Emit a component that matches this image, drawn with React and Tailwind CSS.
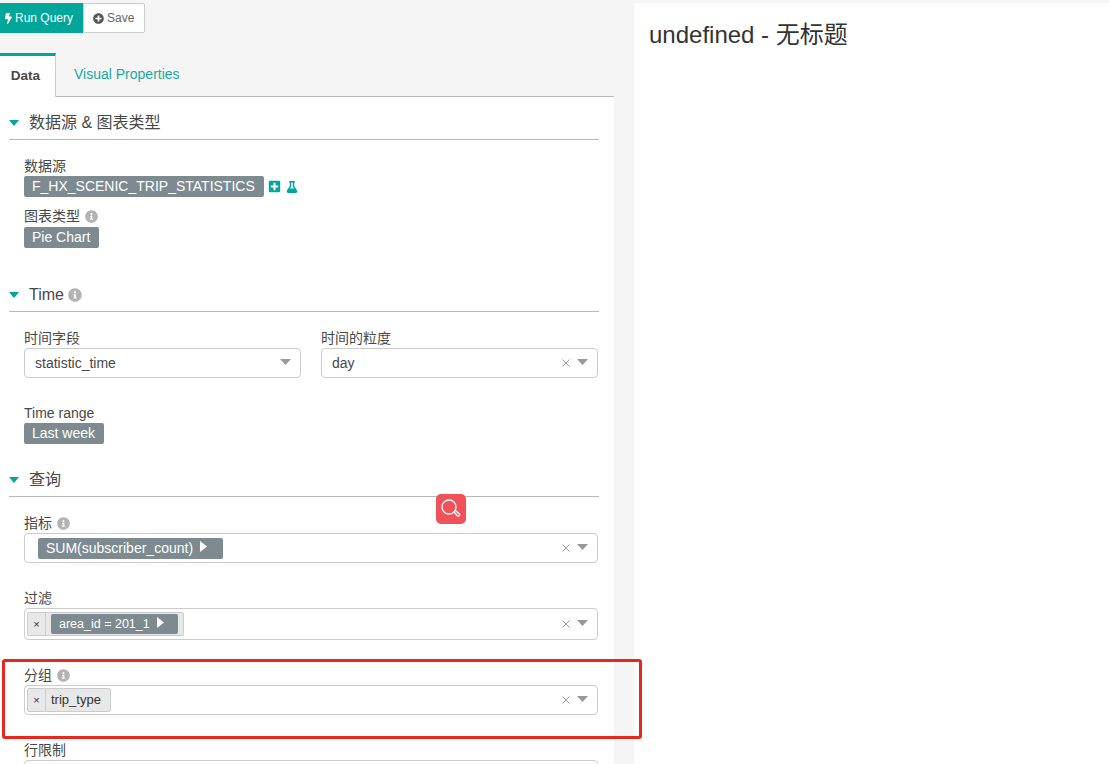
import React from "react";
import { FaBolt, FaPlusCircle, FaPlusSquare, FaFlask, FaInfoCircle } from "react-icons/fa";

const Caret = ({ className }) => (
  <svg viewBox="0 0 10 6" preserveAspectRatio="none" className={className}>
    <path d="M0 0 H10 L5 6 Z" fill="currentColor" />
  </svg>
);

const RightCaret = () => (
  <svg viewBox="0 0 7 11" className="w-[7px] h-[11px] ml-[7px] -mt-[3px]">
    <path d="M0 0 L7 5.5 L0 11 Z" fill="currentColor" />
  </svg>
);

const Info = ({ className = "", size = 13 }) => (
  <FaInfoCircle className={`text-[#b3b3b3] ${className}`} size={size} />
);

const Section = ({ title, children, className = "" }) => (
  <div className={`flex items-center h-[34px] border-b border-[#b8b8b8] w-[590px] ${className}`}>
    <Caret className="w-[10px] h-[6px] text-[#00a699]" />
    <span className="ml-[10px] text-[16px] text-[#484848]">{title}</span>
    {children}
  </div>
);

const Label = ({ children, className = "" }) => (
  <div className={`flex items-center h-[18px] text-[14px] leading-[16px] text-[#484848] ${className}`}>
    {children}
  </div>
);

const Tag = ({ children, className = "" }) => (
  <span className={`inline-flex items-center h-[21px] pl-[8px] pr-[9px] rounded-[2px] bg-[#7d8b91] text-white text-[14px] ${className}`}>
    {children}
  </span>
);

const Controls = ({ clear = true }) => (
  <div className="ml-auto flex items-center gap-[7px] text-[#999]">
    {clear && (
      <svg viewBox="0 0 8 8" className="w-[8px] h-[8px]" stroke="#999" strokeWidth="1" fill="none">
        <path d="M0.5 0.5 L7.5 7.5 M7.5 0.5 L0.5 7.5" />
      </svg>
    )}
    <Caret className="w-[11px] h-[6px] -mt-[2px] text-[#999]" />
  </div>
);

const Select = ({ children, className = "", clear = true }) => (
  <div className={`flex items-center h-[30px] pr-[9px] border border-[#ccc] rounded-[4px] bg-white ${className}`}>
    {children}
    <Controls clear={clear} />
  </div>
);

const Pill = ({ children, gray }) => (
  <div className="flex items-center h-[24px] ml-[2px] border border-[#ccc] rounded-[2px] bg-[#e8e8e8]">
    <span className="flex items-center justify-center w-[18px] h-full border-r border-[#ccc] text-[#333] text-[11px]">×</span>
    {gray ? (
      <span className="flex items-center h-[20px] w-[127px] mx-[5px] pl-[8px] rounded-[2px] bg-[#7d8b91] text-white text-[12.5px]">
        {children}
      </span>
    ) : (
      <span className="pl-[5px] pr-[9px] text-[13px] text-[#333]">{children}</span>
    )}
  </div>
);

export default function App() {
  return (
    <div className="relative flex w-[1109px] h-[764px] overflow-hidden bg-[#f5f5f5] font-['Liberation_Sans','Noto_Sans_CJK_SC',sans-serif]">
      <div className="flex flex-col w-[614px] shrink-0">
        <div className="flex shrink-0 h-[53px] pt-[3px]">
          <button className="flex items-center h-[30px] w-[83px] pl-[4px] bg-[#00a699] text-white text-[12px]">
            <FaBolt size={11} className="mr-[1px] -ml-[1px]" />
            Run Query
          </button>
          <button className="flex items-center h-[30px] w-[62px] pl-[9px] bg-white border border-[#ccc] rounded-r-[2px] text-[#666] text-[12px]">
            <FaPlusCircle size={11} className="mr-[3px] text-[#555]" />
            Save
          </button>
        </div>

        <div className="flex shrink-0 h-[44px] border-b border-[#b8b8b8]">
          <div className="w-[56px] h-[44px] pr-[4px] bg-white border-t-[3px] border-[#00a699] border-r border-r-[#ccc] flex items-center justify-center text-[13.5px] font-bold text-[#484848]">
            Data
          </div>
          <div className="ml-[18px] pt-[11px] text-[14px] text-[#1aa99d]">Visual Properties</div>
        </div>

        <div className="flex-1 min-h-0 bg-white pl-[9px] pt-[9px]">
          <Section title="数据源 & 图表类型" />
          <div className="pl-[15px]">
            <Label className="mt-[17px]">数据源</Label>
            <div className="flex items-center mt-[1px]">
              <Tag>F_HX_SCENIC_TRIP_STATISTICS</Tag>
              <FaPlusSquare size={13} className="ml-[4px] text-[#00a699]" />
              <FaFlask size={12} className="ml-[5px] text-[#00a699]" />
            </div>
            <Label className="mt-[10px]">
              图表类型
              <Info className="ml-[5px]" />
            </Label>
            <div className="flex mt-[2px]">
              <Tag>Pie Chart</Tag>
            </div>
          </div>

          <Section title="Time" className="mt-[30px]">
            <Info className="ml-[4px]" size={14} />
          </Section>
          <div className="pl-[15px]">
            <Label className="mt-[17px]">时间字段</Label>
            <div className="flex gap-[20px] mt-[1px]">
              <Select className="w-[277px] pl-[10px] text-[14px] text-[#484848]" clear={false}>
                statistic_time
              </Select>
              <div className="w-[277px] -mt-[19px]">
                <Label>时间的粒度</Label>
                <Select className="mt-[1px] pl-[10px] text-[14px] text-[#484848]">day</Select>
              </div>
            </div>
            <Label className="mt-[26px]">Time range</Label>
            <div className="flex mt-[1px]">
              <Tag>Last week</Tag>
            </div>
          </div>

          <Section title="查询" className="mt-[19px]" />
          <div className="pl-[15px] w-[589px]">
            <Label className="mt-[17px]">
              指标
              <Info className="ml-[5px]" />
            </Label>
            <Select className="mt-[1px] pl-[13px]">
              <Tag className="pr-[16px]">
                SUM(subscriber_count)
                <RightCaret />
              </Tag>
            </Select>
            <Label className="mt-[26px]">过滤</Label>
            <Select className="mt-[1px] h-[32px]">
              <Pill gray>
                area_id = 201_1
                <RightCaret />
              </Pill>
            </Select>
            <Label className="mt-[26px]">
              分组
              <Info className="ml-[5px]" />
            </Label>
            <Select className="mt-[1px]">
              <Pill>trip_type</Pill>
            </Select>
            <Label className="mt-[26px]">行限制</Label>
            <Select className="mt-[1px]" />
          </div>
        </div>
      </div>

      <div className="ml-[20px] mt-[3px] flex-1 bg-white rounded-tl-[2px] pl-[15px] pt-[17px] text-[24px] leading-[30px] text-[#333]">
        undefined - 无标题
      </div>

      <div className="absolute left-[436px] top-[494px] flex items-center justify-center w-[30px] h-[30px] rounded-[5px] bg-[#f0525a]">
        <svg viewBox="0 0 20 20" className="w-[20px] h-[20px]" fill="none" stroke="#fff" strokeWidth="1.3">
          <circle cx="8" cy="8" r="7" />
          <path d="M13 13 L16 16.5 A1.3 1.3 0 0 0 18.4 15 L15 12" strokeLinecap="round" />
        </svg>
      </div>

      <div className="absolute left-[2px] top-[659px] w-[640px] h-[80px] border-[3px] border-[#e8281e] rounded-[3px]" />
    </div>
  );
}
